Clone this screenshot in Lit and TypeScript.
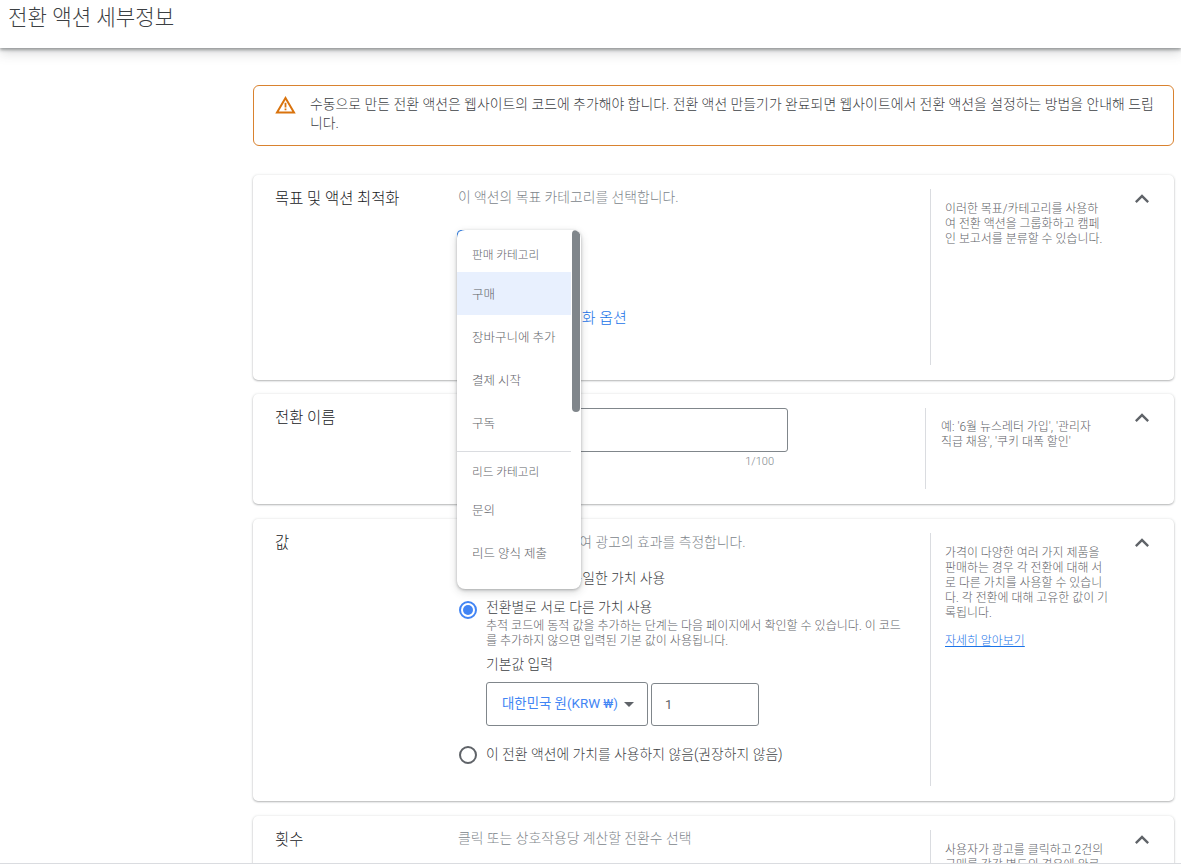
import { LitElement, html, css, svg } from "lit";
import { customElement } from "lit/decorators.js";

const chevron = html`<svg class="chev" width="28" height="28" viewBox="0 0 24 24"><path d="M7.41 15.41 12 10.83l4.59 4.58L18 14l-6-6-6 6z" fill="#5f6368"/></svg>`;

@customElement("app-root")
export class AppRoot extends LitElement {
  static styles = css`
    :host { display: block; position: relative; height: 866px; overflow: hidden; background: #fff;
      font-family: Roboto, "Noto Sans CJK KR", sans-serif; color: #3c4043; }
    * { box-sizing: border-box; }
    header { height: 48px; padding: 4px 8px 0; font-size: 21.2px; line-height: 28px; color: #3c4043; background: #fff;
      box-shadow: 0 2px 3px rgba(60,64,67,.45), 0 4px 12px rgba(60,64,67,.22); position: relative; font-weight: 300; }
    main { padding: 37px 7px 0 253px; display: flex; flex-direction: column; }
    .alert { height: 61px; border: 1px solid #d9822f; border-radius: 6px; display: flex; padding: 9px 16px 0 21px; gap: 14px;
      font-size: 13.9px; line-height: 19px; color: #3c4043; margin-bottom: 29px; }
    .alert svg { flex: none; margin-top: 1px; }
    .alert p { margin: 0; font-weight: 300; }
    .card { background: #fff; border-radius: 5px; display: flex; padding: 14px 0 15px 22px;
      box-shadow: 0 1px 2px rgba(60,64,67,.35), 0 0 3px rgba(60,64,67,.12); }
    .c1 { height: 205px; margin-bottom: 14px; }
    .c2 { height: 110px; margin-bottom: 15px; }
    .c3 { height: 282px; margin-bottom: 15px; }
    .c4 { height: 200px; }
    .label { width: 183px; flex: none; font-size: 15.4px; line-height: 21px; color: #202124; font-weight: 300; }
    .body { flex: 1; min-width: 0; position: relative; }
    .desc { font-size: 13.85px; line-height: 18px; color: #80868b; margin: -1px 0 0; font-weight: 300; }
    .c3 .desc { padding-top: 1px; }
    .help { width: 204px; flex: none; border-left: 1px solid #dadce0; padding: 13px 12px 0 14px; font-size: 11.95px; line-height: 15px; color: #5f6368; font-weight: 300; }
    .help.wide { width: 209px; padding: 12px 16px 0 15px; }
    .help a { display: block; margin-top: 13px; color: #1a73e8; text-decoration: underline; }
    .chevcol { width: 40px; flex: none; }
    .chev { display: block; margin-top: -4px; margin-left: -6px; }
    .goal { width: 100px; height: 60px; margin: 24px 0 0 -1px; border: 1px solid #1a73e8; border-radius: 4px; }
    .opt { margin: 18px 0 0 65px; font-size: 15px; line-height: 20px; color: #1a73e8; font-weight: 300; }
    .name { height: 44px; width: 330px; border: 1px solid #80868b; border-radius: 3px; }
    .count { width: 316px; text-align: right; font-size: 11px; line-height: 14px; color: #80868b; margin-top: 3px; font-weight: 300; }
    .radios { display: flex; flex-direction: column; margin-top: 19px; }
    .radio { display: flex; gap: 8px; font-size: 13.85px; line-height: 18px; color: #3c4043; font-weight: 300; }
    .dot { width: 20px; height: 20px; flex: none; }
    .radio.first { height: 20px; }
    .radio.first span { margin-top: -1px; padding-left: 13px; }
    .radio.second { margin-top: 10px; }
    .radio.second .detail { margin-top: -2px; }
    .radio.third { margin-top: 19px; }
    .sub { font-size: 12.05px; line-height: 15px; color: #5f6368; margin: 3px 0 0; width: 420px; font-weight: 300; }
    .vlabel { font-size: 13.85px; line-height: 18px; margin-top: 6px; }
    .fields { display: flex; align-items: flex-start; gap: 3px; margin-top: 9px; font-weight: 400; }
    .select { width: 162px; height: 44px; border: 1px solid #80868b; border-radius: 3px; display: flex; align-items: center;
      padding-left: 15px; color: #4285f4; font-size: 13.4px; gap: 6px; white-space: nowrap; }
    .caret { width: 0; height: 0; border: 5px solid transparent; border-top-color: #5f6368; border-bottom: 0; flex: none; }
    .num { width: 108px; height: 43px; margin-top: 1px; border: 1px solid #80868b; border-radius: 3px; padding: 11px 13px; font-size: 13px; line-height: 20px; color: #5f6368; }
    .menu { position: absolute; left: 457px; top: 230px; width: 124px; height: 359px; background: #fff; border-radius: 8px; overflow: hidden;
      box-shadow: 0 1px 3px rgba(60,64,67,.35), 0 3px 8px rgba(60,64,67,.2); padding-top: 4px; font-size: 12.5px; font-weight: 300; }
    .menu div { height: 43px; width: 114px; padding-left: 15px; line-height: 46px; white-space: nowrap; color: #5f6368; }
    .menu .h { height: 38px; line-height: 43px; font-size: 11.7px; }
    .menu .sel { background: #e8f0fe; }
    .menu .sep { height: 1px; background: #dadce0; margin: 7px 0 0; padding: 0; }
    .menu .h2 { height: 36px; line-height: 40px; font-size: 11.7px; }
    .menu .thumb { position: absolute; left: 115px; top: 0; width: 8px; height: 182px; border-radius: 4px; background: #80868b; padding: 0; }
    .foot { position: absolute; left: 0; right: 0; bottom: 0; height: 3px; background: #fff; border-top: 1px solid #dadce0; }
  `;

  private radio(on: boolean) {
    const c = on ? "#4285f4" : "#5f6368";
    return html`<svg class="dot" viewBox="0 0 20 20"><circle cx="10" cy="10" r="8" fill="none" stroke=${c} stroke-width="2"></circle>${on ? svg`<circle cx="10" cy="10" r="5" fill=${c}></circle>` : ""}</svg>`;
  }

  render() {
    return html`
      <header>전환 액션 세부정보</header>
      <main>
        <div class="alert">
          <svg width="21" height="18" viewBox="0 0 21 18"><path d="M10.5 2 19 16.5H2z" fill="none" stroke="#d9730d" stroke-width="2"/><path d="M9.6 6.8h1.8v4.6H9.6zM9.6 12.4h1.8v1.8H9.6z" fill="#d9730d"/></svg>
          <p>수동으로 만든 전환 액션은 웹사이트의 코드에 추가해야 합니다. 전환 액션 만들기가 완료되면 웹사이트에서 전환 액션을 설정하는 방법을 안내해 드립니다.</p>
        </div>
        <section class="card c1">
          <div class="label">목표 및 액션 최적화</div>
          <div class="body">
            <p class="desc">이 액션의 목표 카테고리를 선택합니다.</p>
            <div class="goal"></div>
            <div class="opt">액션 최적화 옵션</div>
          </div>
          <aside class="help">이러한 목표/카테고리를 사용하<br />여 전환 액션을 그룹화하고 캠페<br />인 보고서를 분류할 수 있습니다.</aside>
          <div class="chevcol">${chevron}</div>
        </section>
        <section class="card c2">
          <div class="label">전환 이름</div>
          <div class="body">
            <div class="name"></div>
            <div class="count">1/100</div>
          </div>
          <aside class="help wide">예: '6월 뉴스레터 가입', '관리자<br />직급 채용', '쿠키 대폭 할인'</aside>
          <div class="chevcol">${chevron}</div>
        </section>
        <section class="card c3">
          <div class="label">값</div>
          <div class="body">
            <p class="desc">전환에 가치를 할당하여 광고의 효과를 측정합니다.</p>
            <div class="radios">
              <div class="radio first">${this.radio(false)}<span>모든 전환에 동일한 가치 사용</span></div>
              <div class="radio second">${this.radio(true)}
                <div class="detail">
                  전환별로 서로 다른 가치 사용
                  <p class="sub">추적 코드에 동적 값을 추가하는 단계는 다음 페이지에서 확인할 수 있습니다. 이 코드를 추가하지 않으면 입력된 기본 값이 사용됩니다.</p>
                  <div class="vlabel">기본값 입력</div>
                  <div class="fields">
                    <div class="select">대한민국 원(KRW ₩)<span class="caret"></span></div>
                    <div class="num">1</div>
                  </div>
                </div>
              </div>
              <div class="radio third">${this.radio(false)}<span>이 전환 액션에 가치를 사용하지 않음(권장하지 않음)</span></div>
            </div>
          </div>
          <aside class="help">가격이 다양한 여러 가지 제품을<br />판매하는 경우 각 전환에 대해 서<br />로 다른 가치를 사용할 수 있습니<br />다. 각 전환에 대해 고유한 값이 기<br />록됩니다.<a>자세히 알아보기</a></aside>
          <div class="chevcol">${chevron}</div>
        </section>
        <section class="card c4">
          <div class="label">횟수</div>
          <div class="body"><p class="desc">클릭 또는 상호작용당 계산할 전환수 선택</p></div>
          <aside class="help">사용자가 광고를 클릭하고 2건의<br />구매를 각각 별도의 경우에 완료</aside>
          <div class="chevcol">${chevron}</div>
        </section>
      </main>
      <div class="menu">
        <div class="h">판매 카테고리</div>
        <div class="sel">구매</div>
        <div>장바구니에 추가</div>
        <div>결제 시작</div>
        <div>구독</div>
        <div class="sep"></div>
        <div class="h2">리드 카테고리</div>
        <div>문의</div>
        <div>리드 양식 제출</div>
        <div class="thumb"></div>
      </div>
      <div class="foot"></div>
    `;
  }
}
